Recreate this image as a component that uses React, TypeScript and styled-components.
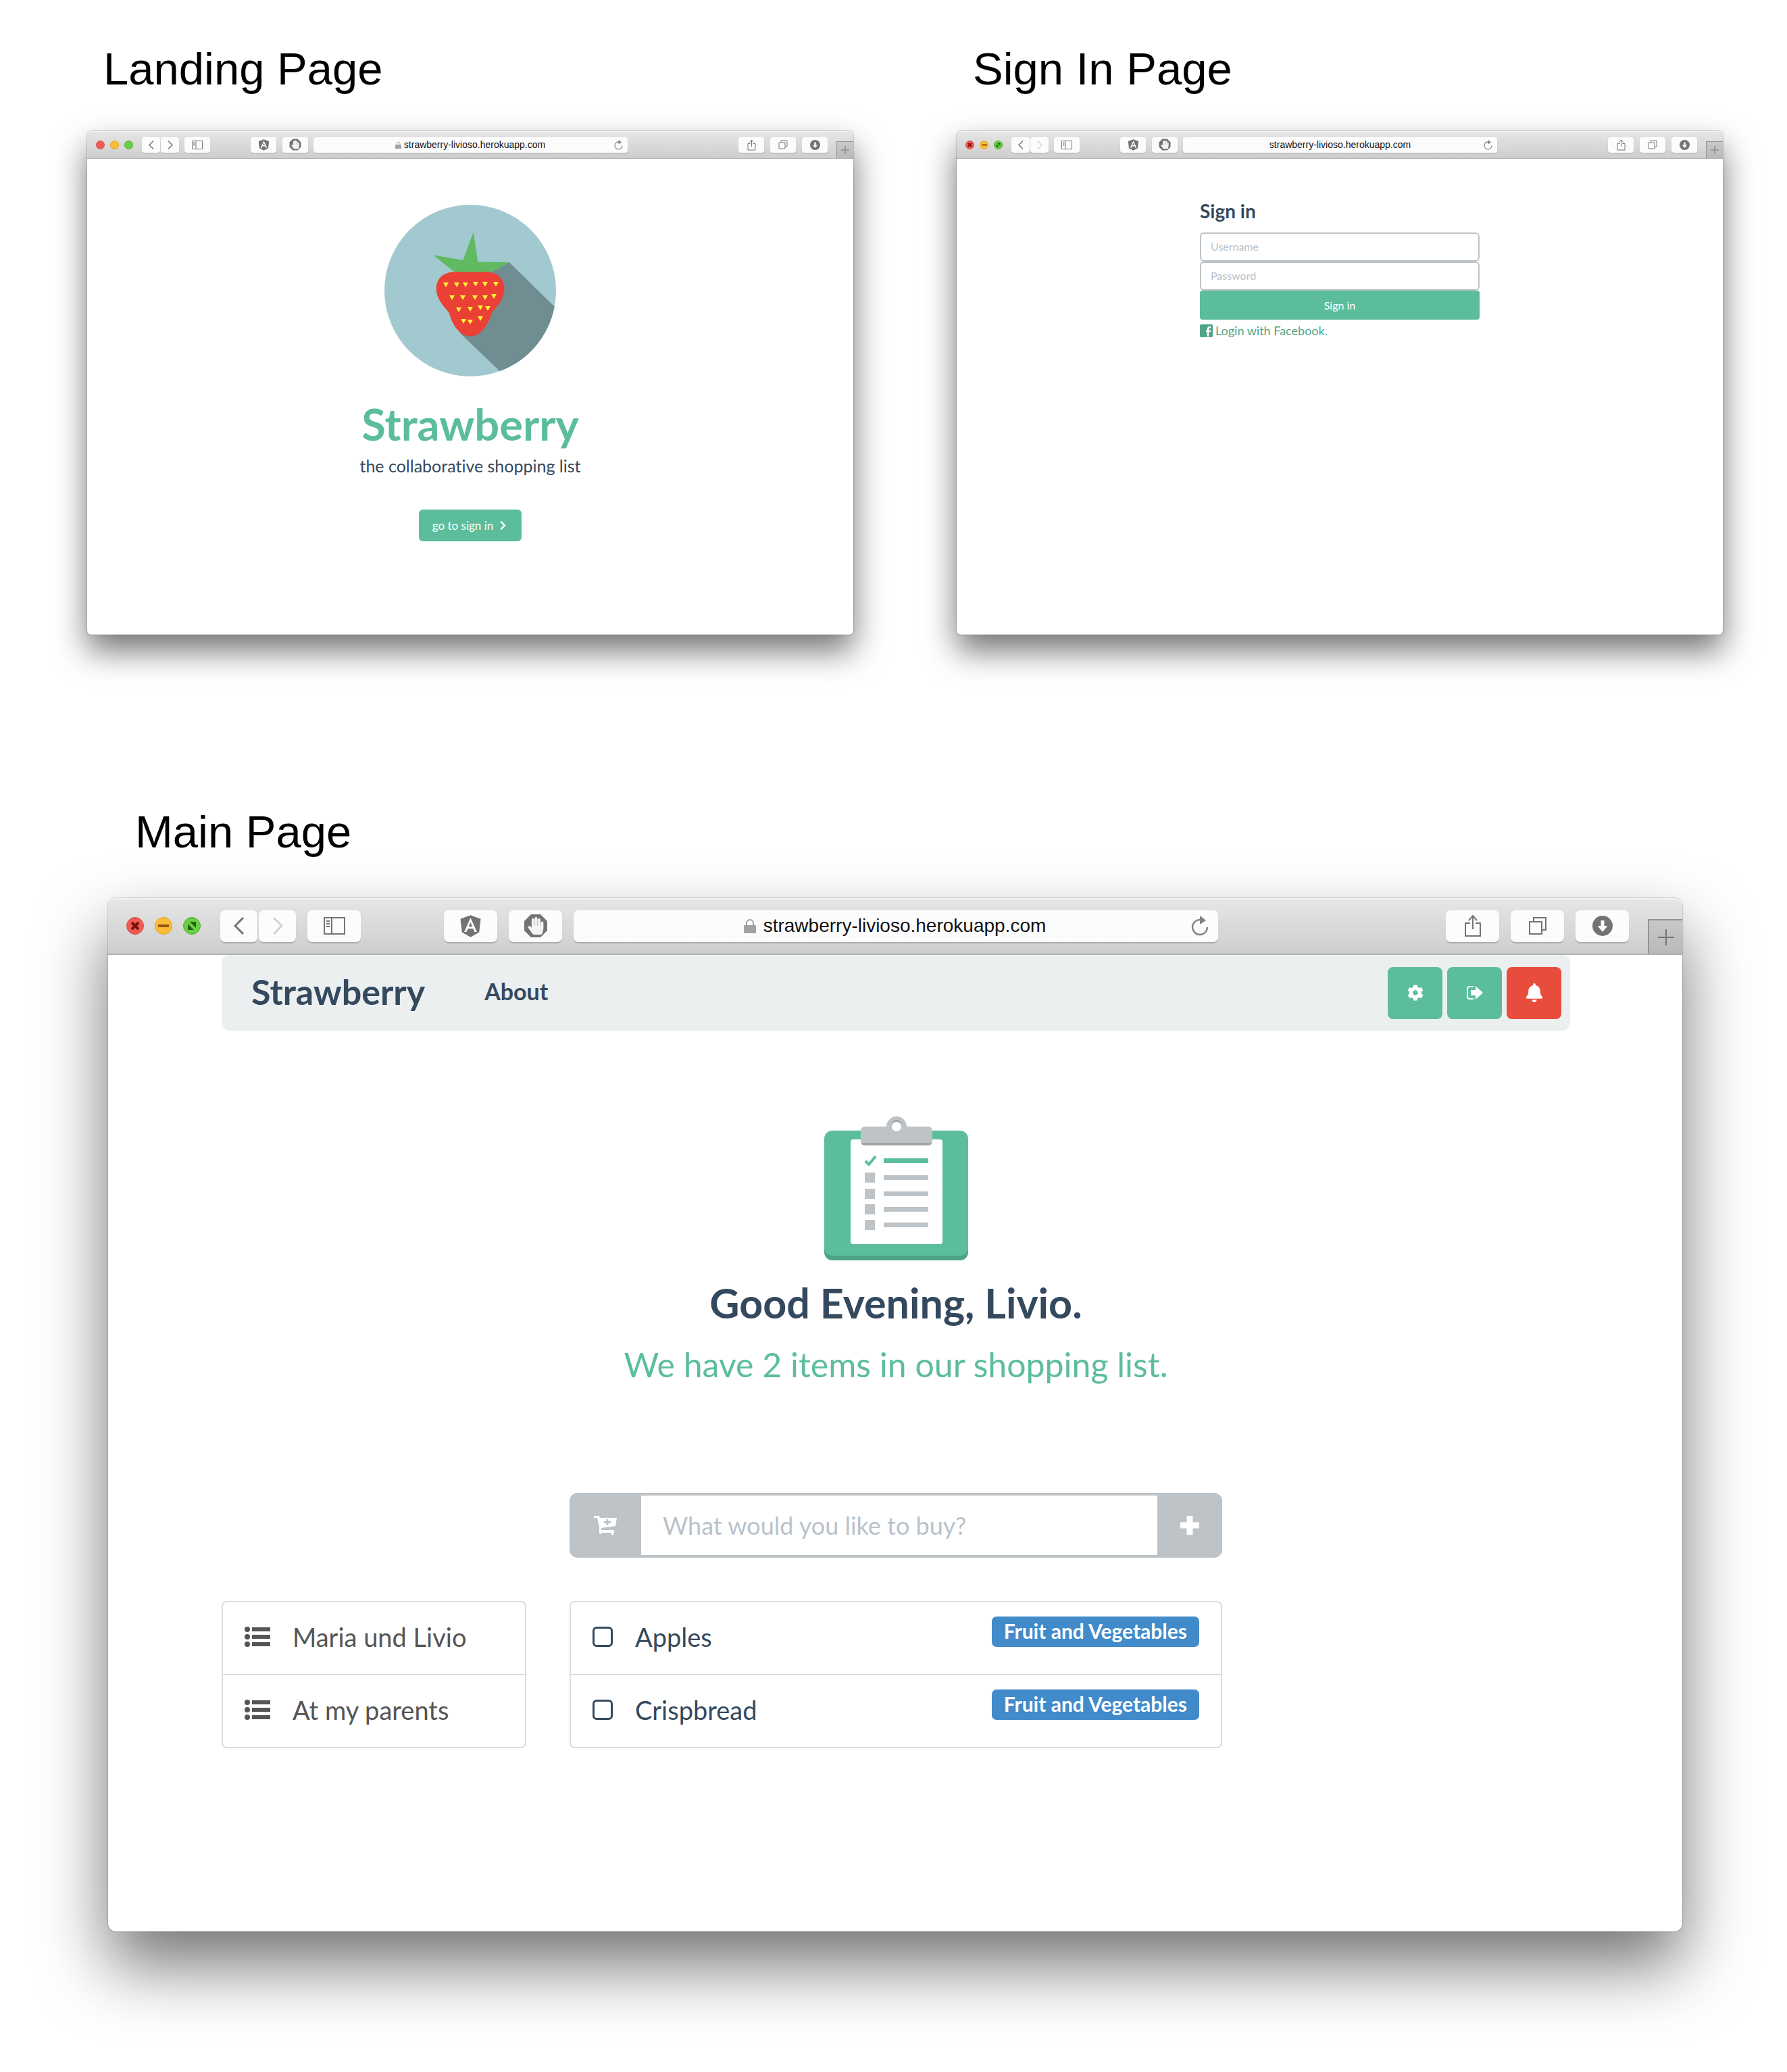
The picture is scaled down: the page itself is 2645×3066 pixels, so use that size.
import React from "react";
import styled, { createGlobalStyle } from "styled-components";
import { FaAngular, FaBell, FaChevronRight, FaCog, FaHandPaper } from "react-icons/fa";

const green = "#5cbd9d";
const navy = "#34495e";
const silver = "#bdc3c7";

const GlobalStyle = createGlobalStyle`
  *, *::before, *::after { box-sizing: border-box; }
  body {
    margin: 0;
    background: #fff;
    font-family: Lato, "Liberation Sans", sans-serif;
    font-variant-ligatures: none;
    color: ${navy};
  }
  h1, h2, h3, p, ul { margin: 0; padding: 0; }
  ul { list-style: none; }
  button, input { font-family: inherit; margin: 0; }
  svg { display: block; flex: none; }
`;

/* ---------- page ---------- */

const Page = styled.main`
  padding: 62px 0 208px;
`;

const TopRow = styled.div`
  display: grid;
  grid-template-columns: 1fr 1fr;
  gap: 153px;
  padding: 0 95px 0 129px;
`;

const MainRow = styled.div`
  padding: 252px 155px 0 160px;
`;

const Caption = styled.h2<{ $large?: boolean }>`
  font: 400 67px/80px "Liberation Sans", Arial, sans-serif;
  color: #000;
  padding-left: ${(p) => (p.$large ? 40 : 24)}px;
  margin-bottom: ${(p) => (p.$large ? 58 : 52)}px;
`;

/* ---------- browser window ---------- */

type Sized = { $large: boolean };
const pick = (large: number, small: number) => (p: Sized) => `${p.$large ? large : small}px`;

const Frame = styled.section<Sized>`
  border-radius: ${pick(12, 6)};
  background: #fff;
  box-shadow: 0 0 2px rgba(0, 0, 0, 0.5),
    0 ${pick(50, 24)} ${pick(100, 48)} rgba(0, 0, 0, 0.55);
`;

const Toolbar = styled.header<Sized>`
  display: flex;
  align-items: center;
  height: ${pick(84, 41)};
  padding-left: ${pick(27, 13)};
  border-radius: ${pick(12, 6)} ${pick(12, 6)} 0 0;
  border-bottom: ${pick(2, 1)} solid #b0b0b0;
  background: linear-gradient(#e6e6e6, #cecece);
  box-shadow: inset 0 ${pick(2, 1)} 0 #f2f2f2;
`;

const Lights = styled.div<Sized>`
  display: flex;
  gap: ${pick(16, 8)};
  margin-right: ${pick(29, 13)};
`;

const Light = styled.button<Sized & { $fill: string; $edge: string }>`
  display: grid;
  place-items: center;
  width: ${pick(26, 13)};
  height: ${pick(26, 13)};
  padding: 0;
  border: 1px solid ${(p) => p.$edge};
  border-radius: 50%;
  background: ${(p) => p.$fill};
`;

const Group = styled.div<Sized & { $tight?: boolean }>`
  display: flex;
  gap: ${(p) => (p.$tight ? (p.$large ? 2 : 1) : p.$large ? 17 : 9)}px;
`;

const ToolButton = styled.button<Sized & { $narrow?: boolean }>`
  display: grid;
  place-items: center;
  width: ${(p) => (p.$narrow ? (p.$large ? 55 : 27) : p.$large ? 79 : 38)}px;
  height: ${pick(47, 23)};
  padding: 0;
  border: 0;
  border-radius: ${pick(7, 4)};
  background: #fcfcfc;
  box-shadow: 0 ${pick(2, 1)} 1px rgba(0, 0, 0, 0.18);
  color: #737373;
`;

const Spacer = styled.div<{ $width: number }>`
  flex: none;
  width: ${(p) => p.$width}px;
`;

const AddressBar = styled.div<Sized>`
  flex: 1;
  display: grid;
  grid-template-columns: 1fr auto 1fr;
  align-items: center;
  height: ${pick(47, 23)};
  padding: 0 ${pick(14, 7)};
  border-radius: ${pick(7, 4)};
  background: #fcfcfc;
  box-shadow: 0 ${pick(2, 1)} 1px rgba(0, 0, 0, 0.18);
`;

const Location = styled.label<Sized>`
  grid-column: 2;
  display: flex;
  align-items: center;
  gap: ${pick(8, 3)};
`;

const LocationInput = styled.input<Sized>`
  width: ${pick(424, 212)};
  padding: 0;
  border: 0;
  background: none;
  text-align: center;
  color: #111;
  font: 400 ${pick(28, 14)}/${pick(34, 18)} "Liberation Sans", Arial, sans-serif;
`;

const Reload = styled.button`
  justify-self: end;
  padding: 0;
  border: 0;
  background: none;
`;

const NewTab = styled.button<Sized>`
  align-self: flex-end;
  display: grid;
  place-items: center;
  width: ${pick(51, 25)};
  height: ${pick(51, 25)};
  margin-left: ${pick(28, 13)};
  padding: 0;
  border: solid #949494;
  border-width: ${pick(2, 1)} 0 0 ${pick(2, 1)};
  background: linear-gradient(#c8c8c8, #b9b9b9);
`;

type GlyphProps = { w: number; h: number; k: number; color?: string; children: React.ReactNode };
const Glyph = ({ w, h, k, color = "#757575", children }: GlyphProps) => (
  <svg width={Math.round(w * k)} height={Math.round(h * k)} viewBox={`0 0 ${w} ${h}`} fill="none" stroke={color} strokeWidth="2" aria-hidden="true">
    {children}
  </svg>
);

type BrowserProps = {
  large?: boolean;
  hovered?: boolean;
  secure?: boolean;
  canGoForward?: boolean;
  children: React.ReactNode;
};

function BrowserWindow({ large = false, hovered, secure, canGoForward, children }: BrowserProps) {
  const k = large ? 1 : 0.5;
  const s = { $large: large };
  return (
    <Frame {...s}>
      <Toolbar {...s}>
        <Lights {...s}>
          <Light {...s} $fill="#ee5c54" $edge="#dd4b43" aria-label="Close">
            {hovered && (
              <Glyph w={14} h={14} k={k} color="#7d0f0b">
                <path d="M2 2l10 10M12 2L2 12" strokeWidth="4" />
              </Glyph>
            )}
          </Light>
          <Light {...s} $fill="#fabd35" $edge="#e0a02a" aria-label="Minimise">
            {hovered && (
              <Glyph w={16} h={14} k={k} color="#985312">
                <path d="M0 7h16" strokeWidth="4" />
              </Glyph>
            )}
          </Light>
          <Light {...s} $fill="#68ce45" $edge="#4fae30" aria-label="Full screen">
            {hovered && (
              <Glyph w={14} h={14} k={k} color="none">
                <path d="M4 1h9v9zM1 4v9h9z" fill="#23610b" />
              </Glyph>
            )}
          </Light>
        </Lights>
        <Group {...s} $tight>
          <ToolButton {...s} $narrow aria-label="Back">
            <Glyph w={16} h={26} k={k}>
              <path d="M14 1L2 13l12 12" strokeWidth="3" />
            </Glyph>
          </ToolButton>
          <ToolButton {...s} $narrow aria-label="Forward">
            <Glyph w={16} h={26} k={k} color={canGoForward ? "#757575" : "#d2d2d2"}>
              <path d="M2 1l12 12L2 25" strokeWidth="3" />
            </Glyph>
          </ToolButton>
        </Group>
        <Spacer $width={large ? 17 : 8} />
        <ToolButton {...s} aria-label="Sidebar">
          <Glyph w={32} h={26} k={k}>
            <path d="M1 1h30v24H1zM12 1v24M4 6h5M4 10h5M4 14h5" />
          </Glyph>
        </ToolButton>
        <Spacer $width={large ? 123 : 60} />
        <Group {...s}>
          <ToolButton {...s} aria-label="Angular extension">
            <FaAngular size={large ? 37 : 19} />
          </ToolButton>
          <ToolButton {...s} aria-label="Content blocker">
            <Glyph w={36} h={36} k={k} color="none">
              <path d="M11 1h14l10 10v14L25 35H11L1 25V11z" fill="#737373" />
              <FaHandPaper x="5" y="5" size={26} color="#f4f4f4" />
            </Glyph>
          </ToolButton>
        </Group>
        <Spacer $width={large ? 17 : 8} />
        <AddressBar {...s}>
          <Location {...s}>
            {secure && (
              <Glyph w={18} h={22} k={k} color="#a2a2a2">
                <path d="M4 11V7a5 5 0 0 1 10 0v4" />
                <rect y="10" width="18" height="12" rx="1" fill="#a2a2a2" stroke="none" />
              </Glyph>
            )}
            <LocationInput {...s} aria-label="Address" readOnly value="strawberry-livioso.herokuapp.com" />
          </Location>
          <Reload aria-label="Reload">
            <Glyph w={26} h={30} k={k} color="#828282">
              <path d="M14 6A11 11 0 1 0 24 17" strokeWidth="2.4" />
              <path d="M13 0l9 7-9 6z" fill="#828282" stroke="none" />
            </Glyph>
          </Reload>
        </AddressBar>
        <Spacer $width={large ? 337 : 164} />
        <Group {...s}>
          <ToolButton {...s} aria-label="Share">
            <Glyph w={26} h={34} k={k}>
              <path d="M9 13H2v19h22V13h-7M13 22V3M7 9l6-7 6 7" />
            </Glyph>
          </ToolButton>
          <ToolButton {...s} aria-label="Show tabs">
            <Glyph w={28} h={28} k={k}>
              <path d="M2 8h18v18H2zM8 7V2h18v18h-5" />
            </Glyph>
          </ToolButton>
          <ToolButton {...s} aria-label="Downloads">
            <Glyph w={30} h={30} k={k} color="none">
              <circle cx="15" cy="15" r="15" fill="#737373" />
              <path d="M12.500 7h5v8h5L15 24l-7.500-9h5z" fill="#fcfcfc" />
            </Glyph>
          </ToolButton>
        </Group>
        <NewTab {...s} aria-label="New tab">
          <Glyph w={24} h={24} k={k}>
            <path d="M12 0v24M0 12h24" />
          </Glyph>
        </NewTab>
      </Toolbar>
      {children}
    </Frame>
  );
}

/* ---------- landing page ---------- */

const Landing = styled.div`
  display: flex;
  flex-direction: column;
  align-items: center;
  min-height: 704px;
  padding-top: 68px;
`;

const LandingTitle = styled.h1`
  margin-top: 32px;
  font: 700 65px/76px Lato, sans-serif;
  color: ${green};
`;

const Tagline = styled.p`
  margin: 9px 0 50px;
  font-size: 25px;
  line-height: 30px;
`;

const Primary = styled.button`
  display: flex;
  align-items: center;
  justify-content: center;
  gap: 7px;
  height: 47px;
  padding: 0 20px;
  border: 0;
  border-radius: 6px;
  background: ${green};
  color: #fff;
  font-size: 17px;
  line-height: 22px;
`;

const seeds = [
  [91, 115], [107, 115], [120, 115], [135, 114], [149, 114], [165, 114],
  [100, 134], [116, 134], [134, 134], [149, 134], [162, 132],
  [110, 152], [127, 151], [142, 149], [153, 150],
  [117, 169], [127, 170], [142, 165],
];

const StrawberryLogo = () => (
  <svg width="254" height="254" viewBox="0 0 254 254" role="img" aria-label="Strawberry logo">
    <circle cx="127" cy="127" r="127" fill="#a1c9cf" />
    <path d="M184.700 85L251.700 150.700A127 127 0 0 1 170.700 246.300L112 190L127 99L157 100z" fill="#708e91" />
    <path d="M72.300 74.600L116.300 82.100L131.700 40.400L138.300 84.600L184.700 85L154 102H107z" fill="#61b962" />
    <path d="M127 99.600C140 99.600 153 98.500 160 100.500C171 103.500 177.700 113 177.700 124C177.700 134 172 144 167 150C161.500 156.500 160 158 158 163C152 181 141 194.600 127 194.600C113 194.600 102 181 96.700 163C95 158 93 156.500 87.500 150C82 143 76.700 134 76.700 124C76.700 113 83 103.500 95 100.500C102 98.500 114 99.600 127 99.600z" fill="#ea4035" />
    {seeds.map(([x, y]) => (
      <path key={`${x}-${y}`} d={`M${x - 4} ${y}h8l-4 7z`} fill="#fdf335" />
    ))}
  </svg>
);

/* ---------- sign in page ---------- */

const SignIn = styled.form`
  width: 414px;
  min-height: 704px;
  margin: 0 auto;
  padding-top: 59px;
`;

const SignInTitle = styled.h1`
  margin-bottom: 14px;
  font-size: 28px;
  line-height: 36px;
`;

const Field = styled.input`
  display: block;
  width: 100%;
  height: 43px;
  padding: 0 14px 2px;
  border: 2px solid ${silver};
  border-radius: 6px;
  background: #fff;
  color: ${navy};
  font-size: 16px;
  line-height: 20px;
  &::placeholder { color: #b9c2cb; opacity: 1; }
`;

const Submit = styled(Primary)`
  width: 100%;
  height: 43px;
  border-radius: 4px;
  font-size: 16px;
  line-height: 20px;
`;

const FacebookLink = styled.a`
  display: flex;
  align-items: center;
  gap: 4px;
  margin-top: 4px;
  color: #4fa588;
  font-size: 18px;
  line-height: 24px;
  text-decoration: none;
`;

/* ---------- main page ---------- */

const Container = styled.div`
  min-height: 1445px;
  padding: 0 166px 0 168px;
`;

const NavBar = styled.nav`
  display: flex;
  align-items: center;
  height: 112px;
  padding: 0 13px 0 44px;
  border-radius: 12px;
  background: #ebefef;
`;

const Brand = styled.a`
  padding-bottom: 4px;
  color: ${navy};
  font-size: 52px;
  font-weight: 700;
  line-height: 60px;
  text-decoration: none;
`;

const NavLink = styled.a`
  margin: 0 auto 0 88px;
  padding-bottom: 4px;
  color: ${navy};
  font-size: 34px;
  font-weight: 700;
  line-height: 42px;
  text-decoration: none;
`;

const NavActions = styled.div`
  display: flex;
  gap: 7px;
`;

const NavButton = styled.button<{ $alert?: boolean }>`
  display: grid;
  place-items: center;
  width: 81px;
  height: 77px;
  padding: 0;
  border: 0;
  border-radius: 8px;
  background: ${(p) => (p.$alert ? "#e84c3d" : green)};
  color: #fff;
`;

const Hero = styled.header`
  display: flex;
  flex-direction: column;
  align-items: center;
  padding: 127px 0 160px;
`;

const Greeting = styled.h1`
  margin: 26px 0 24px;
  font-size: 61px;
  line-height: 74px;
`;

const Summary = styled.p`
  color: ${green};
  font-size: 50px;
  line-height: 60px;
`;

const Columns = styled.div`
  display: grid;
  grid-template-columns: repeat(12, 1fr);
  gap: 64px;
`;

const AddItem = styled.form`
  grid-column: 4 / span 6;
  display: flex;
  height: 96px;
  border: solid ${silver};
  border-width: 4px 0;
  border-radius: 12px;
  background: ${silver};
`;

const AddIcon = styled.label`
  display: grid;
  place-items: center;
  width: 106px;
  color: #fff;
`;

const AddInput = styled.input`
  flex: 1;
  min-width: 0;
  padding: 0 32px;
  border: 0;
  background: #fff;
  color: ${navy};
  font-size: 36px;
  line-height: 46px;
  &::placeholder { color: #b9c2cb; opacity: 1; }
`;

const AddButton = styled.button`
  display: grid;
  place-items: center;
  width: 96px;
  padding: 0;
  border: 0;
  background: none;
  color: #fff;
`;

const Panel = styled.ul<{ $wide?: boolean }>`
  grid-column: ${(p) => (p.$wide ? "4 / span 6" : "1 / span 3")};
  border: 2px solid #ddd;
  border-radius: 8px;
`;

const Row = styled.li`
  display: flex;
  align-items: flex-start;
  justify-content: space-between;
  height: 106px;
  padding: 21px 32px 0;
  & + & {
    height: 108px;
    border-top: 2px solid #ddd;
  }
`;

const ListLink = styled.a`
  display: flex;
  align-items: center;
  gap: 33px;
  margin-top: 7px;
  color: #555;
  font-size: 38px;
  line-height: 46px;
  text-decoration: none;
`;

const ItemLabel = styled.label`
  display: flex;
  align-items: center;
  gap: 33px;
  margin-top: 7px;
  font-size: 38px;
  line-height: 46px;
`;

const Tick = styled.input`
  appearance: none;
  width: 30px;
  height: 30px;
  border: 3px solid ${navy};
  border-radius: 6px;
`;

const Tag = styled.span`
  height: 45px;
  padding: 0 18px;
  border-radius: 7px;
  background: #428bca;
  color: #fff;
  font-size: 30px;
  font-weight: 700;
  line-height: 42px;
`;

const Clipboard = () => (
  <svg width="213" height="213" viewBox="0 0 213 213" role="img" aria-label="Shopping list">
    <rect y="35" width="213" height="178" rx="12" fill="#4fa287" />
    <rect y="21" width="213" height="185" rx="12" fill={green} />
    <rect x="39" y="34" width="136" height="155" rx="4" fill="#fff" />
    <rect x="54" y="20" width="106" height="23" rx="6" fill="#a1a6a9" />
    <path d="M60 15H92V15A15 15 0 0 1 122 15H154A6 6 0 0 1 160 21V39H54V21A6 6 0 0 1 60 15z" fill={silver} />
    <circle cx="107" cy="12" r="7" fill="#a1a6a9" />
    <circle cx="107" cy="15" r="7" fill="#fff" />
    <path d="M61 66l5 5 10-12" fill="none" stroke={green} strokeWidth="4" />
    <rect x="88" y="62" width="66" height="7" fill={green} />
    {[83, 107, 130, 153].map((y) => (
      <React.Fragment key={y}>
        <rect x="60" y={y} width="15" height="15" fill={silver} />
        <rect x="88" y={y + 4} width="66" height="7" fill={silver} />
      </React.Fragment>
    ))}
  </svg>
);

const CartIcon = () => (
  <svg width="34" height="29" viewBox="0 0 34 29" fill="currentColor" aria-hidden="true">
    <path d="M0 0h8l1 3h25l-2 12-21 3v3h19v4h-1a2 2 0 1 1-3 0H12a2 2 0 1 1-4 0V17L5 3H0z" />
    <path d="M20 5v9M15 9.500h10" stroke={silver} strokeWidth="3" />
  </svg>
);

const PlusIcon = () => (
  <svg width="30" height="30" viewBox="0 0 30 30" aria-hidden="true">
    <path d="M15 1v28M1 15h28" stroke="currentColor" strokeWidth="9" />
  </svg>
);

const LogOutIcon = () => (
  <svg width="24" height="22" viewBox="0 0 24 22" aria-hidden="true">
    <path d="M10 2H4a3 3 0 0 0-3 3v12a3 3 0 0 0 3 3h6" fill="none" stroke="#fff" strokeWidth="2" />
    <path d="M6 7h7V1l11 10-11 10v-6H6z" fill="#fff" />
  </svg>
);

const ListIcon = () => (
  <svg width="38" height="32" viewBox="0 0 38 32" fill="currentColor" aria-hidden="true">
    {[5, 16, 27].map((y) => (
      <React.Fragment key={y}>
        <circle cx="4" cy={y} r="4" />
        <rect x="11" y={y - 3} width="27" height="6" />
      </React.Fragment>
    ))}
  </svg>
);

const FacebookIcon = () => (
  <svg width="19" height="19" viewBox="0 0 19 19" aria-hidden="true">
    <rect width="19" height="19" rx="2" fill="currentColor" />
    <path d="M9 10h7M12 18V7q0-3 4-3" fill="none" stroke="#fff" strokeWidth="2.500" />
  </svg>
);

const lists = ["Maria und Livio", "At my parents"];
const items = [
  { name: "Apples", category: "Fruit and Vegetables" },
  { name: "Crispbread", category: "Fruit and Vegetables" },
];

export default function App() {
  return (
    <Page>
      <GlobalStyle />
      <TopRow>
        <div>
          <Caption>Landing Page</Caption>
          <BrowserWindow secure canGoForward>
            <Landing>
              <StrawberryLogo />
              <LandingTitle>Strawberry</LandingTitle>
              <Tagline>the collaborative shopping list</Tagline>
              <Primary>
                go to sign in <FaChevronRight size={15} />
              </Primary>
            </Landing>
          </BrowserWindow>
        </div>
        <div>
          <Caption>Sign In Page</Caption>
          <BrowserWindow hovered>
            <SignIn>
              <SignInTitle>Sign in</SignInTitle>
              <Field aria-label="Username" placeholder="Username" />
              <Field aria-label="Password" type="password" placeholder="Password" />
              <Submit type="button">Sign in</Submit>
              <FacebookLink href="#facebook">
                <FacebookIcon />
                Login with Facebook.
              </FacebookLink>
            </SignIn>
          </BrowserWindow>
        </div>
      </TopRow>
      <MainRow>
        <Caption $large>Main Page</Caption>
        <BrowserWindow large hovered secure>
          <Container>
            <NavBar>
              <Brand href="#home">Strawberry</Brand>
              <NavLink href="#about">About</NavLink>
              <NavActions>
                <NavButton aria-label="Settings"><FaCog size={24} /></NavButton>
                <NavButton aria-label="Log out"><LogOutIcon /></NavButton>
                <NavButton $alert aria-label="Notifications"><FaBell size={28} /></NavButton>
              </NavActions>
            </NavBar>
            <Hero>
              <Clipboard />
              <Greeting>Good Evening, Livio.</Greeting>
              <Summary>We have 2 items in our shopping list.</Summary>
            </Hero>
            <Columns>
              <AddItem>
                <AddIcon htmlFor="new-item" aria-label="New item">
                  <CartIcon />
                </AddIcon>
                <AddInput id="new-item" placeholder="What would you like to buy?" />
                <AddButton type="button" aria-label="Add"><PlusIcon /></AddButton>
              </AddItem>
              <Panel>
                {lists.map((name) => (
                  <Row key={name}>
                    <ListLink href="#list">
                      <ListIcon />
                      {name}
                    </ListLink>
                  </Row>
                ))}
              </Panel>
              <Panel $wide>
                {items.map((item) => (
                  <Row key={item.name}>
                    <ItemLabel>
                      <Tick type="checkbox" />
                      {item.name}
                    </ItemLabel>
                    <Tag>{item.category}</Tag>
                  </Row>
                ))}
              </Panel>
            </Columns>
          </Container>
        </BrowserWindow>
      </MainRow>
    </Page>
  );
}
